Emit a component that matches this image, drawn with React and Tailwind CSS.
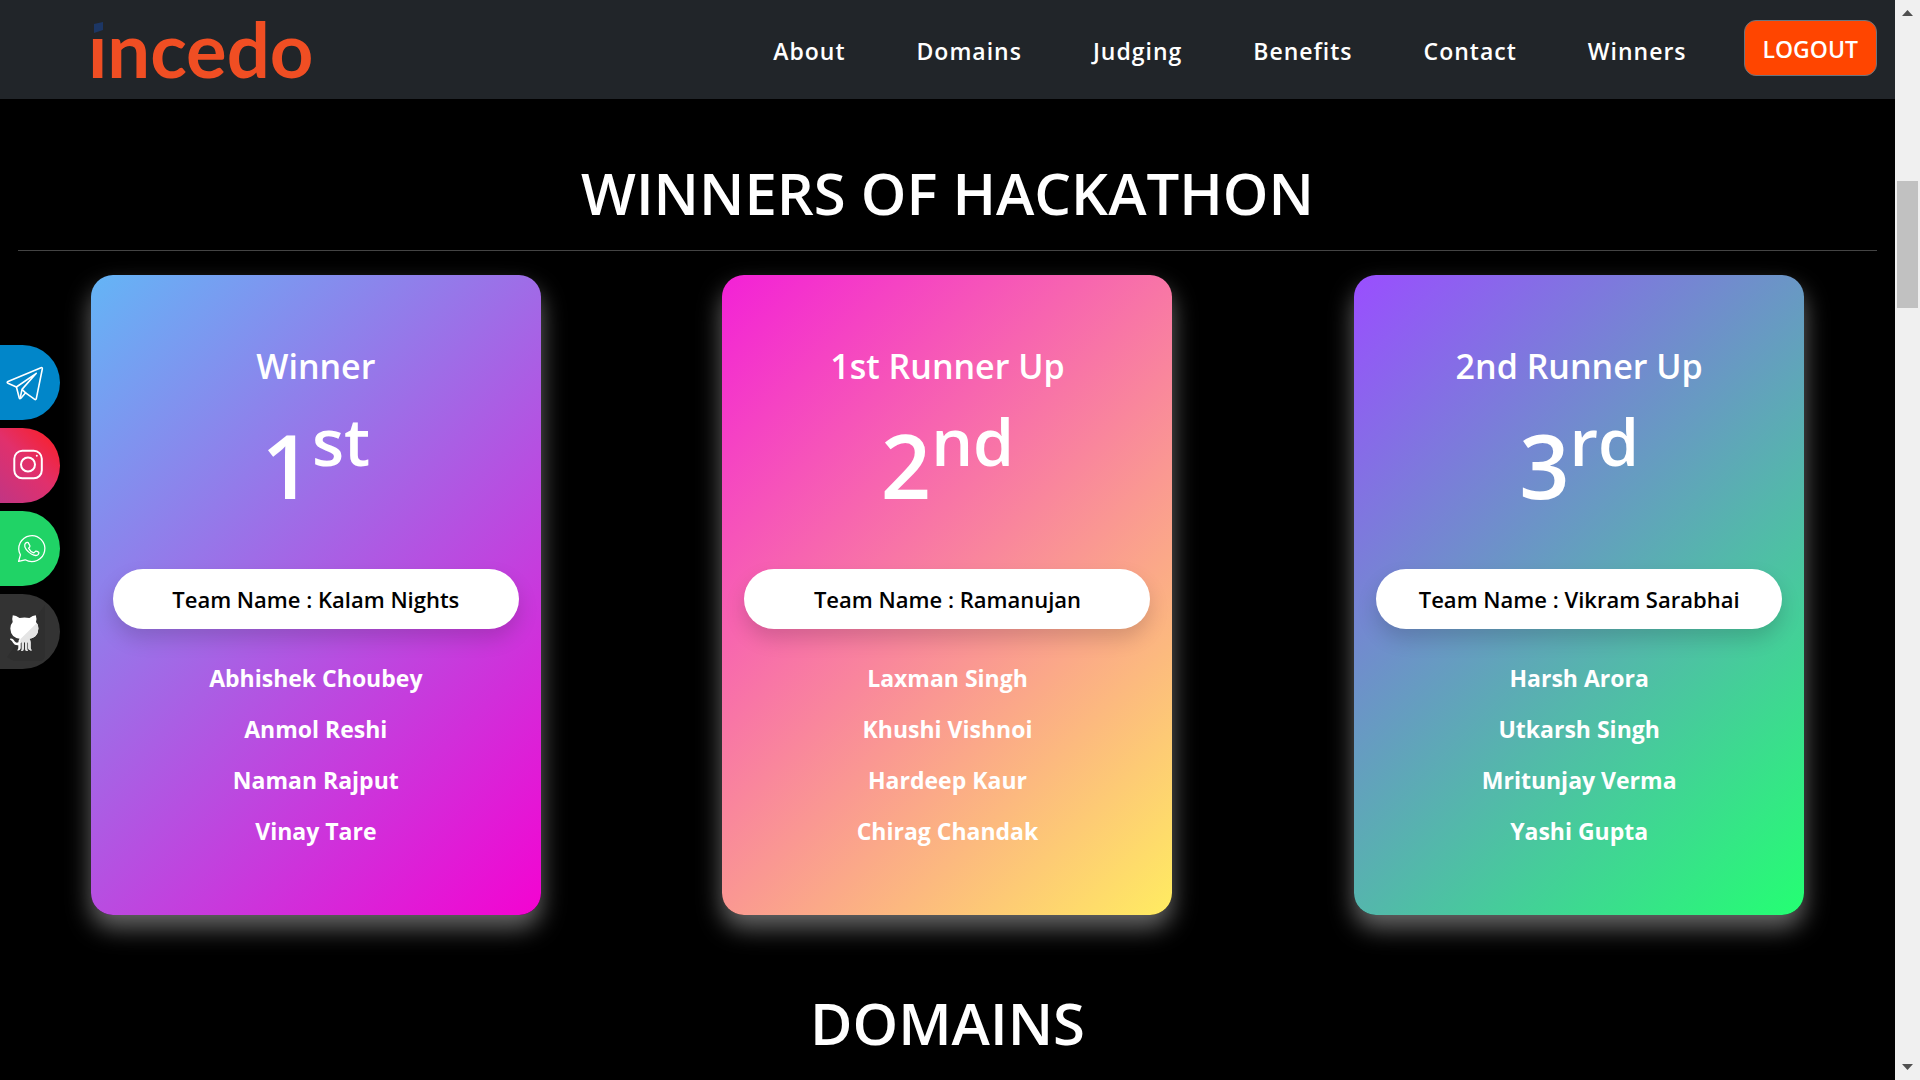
const navLinks = ["About", "Domains", "Judging", "Benefits", "Contact", "Winners"];

const cards = [
  {
    title: "Winner",
    place: "1",
    suffix: "st",
    team: "Kalam Nights",
    members: ["Abhishek Choubey", "Anmol Reshi", "Naman Rajput", "Vinay Tare"],
    gradient: "bg-[linear-gradient(-45deg,#f403d1,#64b5f6)]",
  },
  {
    title: "1st Runner Up",
    place: "2",
    suffix: "nd",
    team: "Ramanujan",
    members: ["Laxman Singh", "Khushi Vishnoi", "Hardeep Kaur", "Chirag Chandak"],
    gradient: "bg-[linear-gradient(-45deg,#ffec61,#f321d7)]",
  },
  {
    title: "2nd Runner Up",
    place: "3",
    suffix: "rd",
    team: "Vikram Sarabhai",
    members: ["Harsh Arora", "Utkarsh Singh", "Mritunjay Verma", "Yashi Gupta"],
    gradient: "bg-[linear-gradient(-45deg,#24ff72,#9a4eff)]",
  },
];

function TelegramIcon() {
  return (
    <svg viewBox="0 0 60 75" className="h-[75px] w-[60px]" fill="none" stroke="#fff" strokeWidth="1.6" strokeLinejoin="round" strokeLinecap="round" aria-hidden="true">
      <path d="M8 36.5 L41 22.8 Q42.6 22.2 42.3 24 L36.3 53.6 Q35.9 55.2 34.4 54.2 L25.6 47.8 L20.9 53.2 Q19.6 54.2 19.2 52.8 L16.4 42 L8 38.3 Q6.4 37.4 8 36.5 Z" />
      <path d="M16.4 42 L36.3 28.3 L22 44.4 L25.6 47.8 M22 44.4 L20.2 53" />
    </svg>
  );
}

function InstagramIcon() {
  return (
    <svg viewBox="0 0 60 75" className="h-[75px] w-[60px]" fill="none" stroke="#fff" strokeWidth="2" aria-hidden="true">
      <rect x="14.3" y="22.8" width="27.5" height="27.5" rx="8" />
      <circle cx="28" cy="36.5" r="7" />
      <circle cx="36.8" cy="27.7" r="1" fill="#fff" stroke="none" />
    </svg>
  );
}

function WhatsappIcon() {
  return (
    <svg viewBox="0 0 60 75" className="h-[75px] w-[60px]" fill="none" stroke="#fff" strokeWidth="1.3" strokeLinejoin="round" strokeLinecap="round" aria-hidden="true">
      <path d="M18.6 50.4 L20.4 43.8 A13 13 0 1 1 25.2 48.8 Z" />
      <path d="M24.8 33.5 C25.6 31.7 27 30.9 28.2 31.6 L29.9 34.8 Q30.3 35.7 28.6 37.2 Q30.2 40.6 33.8 41.9 L35.7 40.1 Q36.4 39.7 38.7 41.3 Q39.3 41.8 38.3 43.3 C36.9 45.1 34.4 44.7 31.4 43 C27.6 40.7 23.9 36.6 24.8 33.5 Z" />
    </svg>
  );
}

function GithubIcon() {
  return (
    <svg viewBox="0 0 60 75" className="h-[75px] w-[60px]" aria-hidden="true">
      <path d="M45 11 V61 Q45 67 39 67 H14 L7 63 Z" fill="#2f2f2f" />
      <path
        d="M12.8 21.2 Q16 21.3 19.6 24 Q24.5 22.9 29.4 24 Q32.8 21.3 35.8 21.2 Q37 24.6 36 28 Q38.6 30.8 38.4 34.6 Q38 43.6 29.3 44.8 Q30.6 46.3 30.6 48.5 V54 Q30.6 55.6 32 56.3 Q28.6 57 28.2 54.3 V49.5 Q28.2 48.3 27.2 48.3 V55 Q27.2 56.4 28 57 Q25 57.3 25 54.5 V48.3 H23.8 V54.5 Q23.8 57.3 21 57 Q21.8 56.4 21.8 55 V48.3 Q20.7 48.3 20.7 49.5 V54.3 Q20.3 57 17 56.3 Q18.3 55.6 18.3 54 V51.3 Q14.6 51.7 13.2 49 Q12.2 46.6 10 45.5 Q9.7 43.8 12.2 44.8 Q13.6 45.6 14.8 47.6 Q16.2 49.3 18.4 48.3 Q18.4 46.2 19.6 44.8 Q10.8 43.6 10.3 34.6 Q10.2 30.8 12.7 28 Q11.8 24.6 12.8 21.2 Z"
        fill="#fff"
      />
      <path d="M36.8 29 Q38.6 31 38.4 34.6 Q38 43.6 29.3 44.8 Q30.6 46.3 30.6 48.5 V54 Q30.6 55.6 32 56.3 Q28.6 57 28.2 54.3 V49.5 Q28.2 48.3 27.2 48.3 V55 Q27.2 56.4 28 57 Q25 57.3 25 54.5 V48.3 H23.8 V54.5 Q23.8 57.3 21 57 Q21.8 56.4 21.8 55 V48.3 H20 L20.5 45 Z" fill="#e4e4e4" />
    </svg>
  );
}

const socials = [
  { name: "Telegram", Icon: TelegramIcon, bg: "bg-[#0186c9]" },
  { name: "Instagram", Icon: InstagramIcon, bg: "bg-[linear-gradient(45deg,#c13584,#e1306c,#fd1d1d)]" },
  { name: "WhatsApp", Icon: WhatsappIcon, bg: "bg-[#20d366]" },
  { name: "GitHub", Icon: GithubIcon, bg: "bg-[#333333]" },
];

function Logo() {
  return (
    <a href="#home" className="relative block font-['Lato',sans-serif] text-[76px] leading-[94px] font-bold text-[#f04e23]">
      incedo
      <span className="absolute top-[14px] left-0 h-[19px] w-[19px] bg-[#212529]" />
      <svg viewBox="0 0 9 11" className="absolute top-[20px] left-[6px] h-[11px] w-[9px]" aria-hidden="true">
        <path d="M0 2 L9 0 V8 L0 11 Z" fill="#1c3664" />
      </svg>
    </a>
  );
}

function Header() {
  return (
    <header className="flex h-[99px] shrink-0 items-center justify-between bg-[#212529] pr-[18px] pb-0.5 pl-[88px]">
      <Logo />
      <div className="flex items-center">
        <nav className="flex gap-[71px] pt-1.5 text-[23px] font-semibold tracking-[1px]">
          {navLinks.map((label) => (
            <a key={label} href={`#${label.toLowerCase()}`}>
              {label}
            </a>
          ))}
        </nav>
        <button type="button" className="mb-0.5 ml-[57px] h-14 rounded-xl border border-[#6c757d] bg-[#ff4500] px-[18px] pt-1 text-[23px] font-semibold">
          LOGOUT
        </button>
      </div>
    </header>
  );
}

function WinnerCard({ title, place, suffix, team, members, gradient }) {
  return (
    <article className={`h-[640px] w-[450px] rounded-[22px] px-[22px] pt-[68px] text-center shadow-[0_13px_25px_rgba(255,255,255,0.4)] ${gradient}`}>
      <h3 className="text-[34px] leading-[46px] font-semibold">{title}</h3>
      <p className="mt-2.5 h-[170px] text-[88px] leading-[132px] font-semibold">
        {place}
        <sup className="text-[66px] leading-none">{suffix}</sup>
      </p>
      <h4 className="flex h-[60px] items-center justify-center rounded-full bg-white text-[22px] font-semibold text-black shadow-[0_10px_20px_rgba(0,0,0,0.15)]">
        Team Name : {team}
      </h4>
      <ul className="mt-6 text-[23px] leading-[51px] font-bold">
        {members.map((m) => (
          <li key={m}>{m}</li>
        ))}
      </ul>
    </article>
  );
}

function Scrollbar() {
  return (
    <div className="flex w-[25px] shrink-0 flex-col items-center justify-between bg-[#f0f0f0] py-2.5" aria-hidden="true">
      <svg viewBox="0 0 11 6" className="h-[6px] w-[11px]">
        <path d="M0 6 L5.5 0 L11 6 Z" fill="#505050" />
      </svg>
      <div className="flex w-full grow flex-col items-center pt-[165px]">
        <div className="h-[127px] w-[21px] bg-[#c1c1c1]" />
      </div>
      <svg viewBox="0 0 11 6" className="h-[6px] w-[11px]">
        <path d="M0 0 L5.5 6 L11 0 Z" fill="#505050" />
      </svg>
    </div>
  );
}

export default function App() {
  return (
    <div className="flex h-screen overflow-hidden bg-black font-['Open_Sans','Noto_Sans',sans-serif] text-white">
      <div className="flex min-w-0 grow flex-col overflow-hidden">
        <Header />
        <main>
          <section id="winners">
            <h2 className="pt-[58px] text-center text-[58px] leading-[72px] font-semibold">WINNERS OF HACKATHON</h2>
            <hr className="mx-[18px] mt-[21px] border-[#444444]" />
            <div className="mt-6 grid grid-cols-3 justify-items-center">
              {cards.map((card) => (
                <WinnerCard key={card.title} {...card} />
              ))}
            </div>
          </section>
          <section id="domains">
            <h2 className="mt-[72px] text-center text-[58px] leading-[72px] font-semibold">DOMAINS</h2>
          </section>
        </main>
      </div>
      <Scrollbar />
      <aside className="fixed top-[345px] left-0 flex flex-col gap-2">
        {socials.map(({ name, Icon, bg }) => (
          <a key={name} href={`#${name.toLowerCase()}`} aria-label={name} className={`h-[75px] w-[60px] overflow-hidden rounded-r-full ${bg}`}>
            <Icon />
          </a>
        ))}
      </aside>
    </div>
  );
}
